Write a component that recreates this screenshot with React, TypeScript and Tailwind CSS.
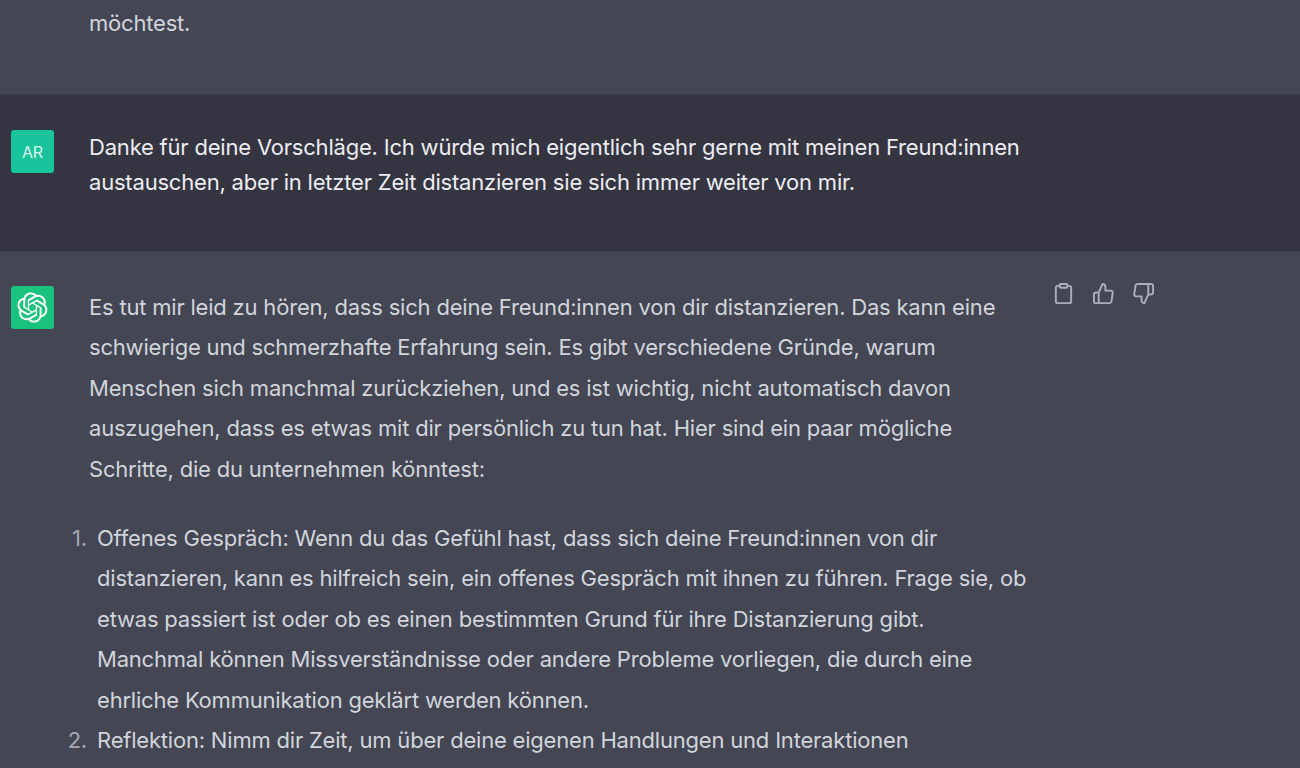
const logoPath =
  "M37.5324 16.8707C37.9808 15.5241 38.1363 14.0974 37.9886 12.6859C37.8409 11.2744 37.3934 9.91076 36.676 8.68622C35.6126 6.83404 33.9882 5.3676 32.0373 4.4985C30.0864 3.62941 27.9098 3.40259 25.8215 3.85078C24.8796 2.7893 23.7219 1.94125 22.4257 1.36341C21.1295 0.785575 19.7249 0.491269 18.3058 0.500197C16.1708 0.495044 14.0893 1.16803 12.3614 2.42214C10.6335 3.67624 9.34853 5.44666 8.6917 7.47815C7.30085 7.76286 5.98686 8.3414 4.8377 9.17505C3.68854 10.0087 2.73073 11.0782 2.02839 12.312C0.956464 14.1591 0.498905 16.2988 0.721698 18.4228C0.944492 20.5467 1.83612 22.5449 3.268 24.1293C2.81966 25.4759 2.66413 26.9026 2.81182 28.3141C2.95951 29.7256 3.40701 31.0892 4.12437 32.3138C5.18791 34.1659 6.8123 35.6322 8.76321 36.5013C10.7141 37.3704 12.8907 37.5973 14.9789 37.1492C15.9208 38.2107 17.0786 39.0587 18.3747 39.6366C19.6709 40.2144 21.0755 40.5087 22.4946 40.4998C24.6307 40.5054 26.7133 39.8321 28.4418 38.5772C30.1704 37.3223 31.4556 35.5506 32.1119 33.5179C33.5027 33.2332 34.8167 32.6547 35.9659 31.821C37.115 30.9874 38.0728 29.9178 38.7752 28.684C39.8458 26.8371 40.3023 24.6979 40.0789 22.5748C39.8556 20.4517 38.9639 18.4544 37.5324 16.8707ZM22.4978 37.8849C20.7443 37.8874 19.0459 37.2733 17.6994 36.1501C17.7601 36.117 17.8666 36.0586 17.936 36.0161L25.9004 31.4156C26.1003 31.3019 26.2663 31.137 26.3813 30.9378C26.4964 30.7386 26.5563 30.5124 26.5549 30.2825V19.0542L29.9213 20.998C29.9389 21.0068 29.9541 21.0198 29.9656 21.0359C29.977 21.052 29.9842 21.0707 29.9867 21.0902V30.3889C29.9842 32.375 29.1946 34.2791 27.7909 35.6841C26.3872 37.0892 24.4838 37.8806 22.4978 37.8849ZM6.39227 31.0064C5.51397 29.4888 5.19742 27.7107 5.49804 25.9832C5.55718 26.0187 5.66048 26.0818 5.73461 26.1244L13.699 30.7248C13.8975 30.8408 14.1233 30.902 14.3532 30.902C14.583 30.902 14.8088 30.8408 15.0073 30.7248L24.731 25.1103V28.9979C24.7321 29.0177 24.7283 29.0376 24.7199 29.0556C24.7115 29.0736 24.6988 29.0893 24.6829 29.1012L16.6317 33.7497C14.9096 34.7416 12.8643 35.0097 10.9447 34.4954C9.02506 33.9811 7.38785 32.7263 6.39227 31.0064ZM4.29707 13.6194C5.17156 12.0998 6.55279 10.9364 8.19885 10.3327C8.19885 10.4013 8.19491 10.5228 8.19491 10.6071V19.808C8.19351 20.0378 8.25334 20.2638 8.36823 20.4629C8.48312 20.6619 8.64893 20.8267 8.84863 20.9404L18.5723 26.5542L15.206 28.4979C15.1894 28.5089 15.1703 28.5155 15.1505 28.5173C15.1307 28.5191 15.1107 28.516 15.0924 28.5082L7.04046 23.8557C5.32135 22.8601 4.06716 21.2235 3.55289 19.3046C3.03862 17.3858 3.30624 15.3413 4.29707 13.6194ZM31.955 20.0556L22.2312 14.4411L25.5976 12.4981C25.6142 12.4872 25.6333 12.4805 25.6531 12.4787C25.6729 12.4769 25.6928 12.4801 25.7111 12.4879L33.7631 17.1364C34.9967 17.849 36.0017 18.8982 36.6606 20.1613C37.3194 21.4244 37.6047 22.849 37.4832 24.2684C37.3617 25.6878 36.8382 27.0432 35.9743 28.1759C35.1103 29.3086 33.9415 30.1717 32.6047 30.6641C32.6047 30.5947 32.6047 30.4733 32.6047 30.3889V21.188C32.6066 20.9586 32.5474 20.7328 32.4332 20.5338C32.319 20.3348 32.154 20.1698 31.955 20.0556ZM35.3055 15.0128C35.2464 14.9765 35.1431 14.9142 35.069 14.8717L27.1045 10.2712C26.906 10.1554 26.6803 10.0943 26.4504 10.0943C26.2206 10.0943 25.9948 10.1554 25.7963 10.2712L16.0726 15.8858V11.9982C16.0715 11.9783 16.0753 11.9585 16.0837 11.9405C16.0921 11.9225 16.1048 11.9068 16.1207 11.8949L24.1719 7.25025C25.4053 6.53903 26.8158 6.19376 28.2383 6.25482C29.6608 6.31589 31.0364 6.78077 32.2044 7.59508C33.3723 8.40939 34.2842 9.53945 34.8334 10.8531C35.3826 12.1667 35.5464 13.6095 35.3055 15.0128ZM14.2424 21.9419L10.8752 19.9981C10.8576 19.9893 10.8423 19.9763 10.8309 19.9602C10.8195 19.9441 10.8122 19.9254 10.8098 19.9058V10.6071C10.8107 9.18295 11.2173 7.78848 11.9819 6.58696C12.7466 5.38544 13.8377 4.42659 15.1275 3.82264C16.4173 3.21869 17.8524 2.99464 19.2649 3.1767C20.6775 3.35876 22.0089 3.93941 23.1034 4.85067C23.0427 4.88379 22.937 4.94215 22.8668 4.98473L14.9024 9.58517C14.7025 9.69878 14.5366 9.86356 14.4215 10.0626C14.3065 10.2616 14.2466 10.4877 14.2479 10.7175L14.2424 21.9419ZM16.071 17.9991L20.4018 15.4978L24.7325 17.9975V22.9985L20.4018 25.4983L16.071 22.9985V17.9991Z";

function ActionIcon({ children }: { children: React.ReactNode }) {
  return (
    <svg viewBox="0 0 24 24" fill="none" stroke="currentColor" strokeWidth="2" strokeLinecap="round" strokeLinejoin="round" className="w-[23px] h-[23px]">
      {children}
    </svg>
  );
}

const listOne = [
  "Offenes Gespräch: Wenn du das Gefühl hast, dass sich deine Freund:innen von dir",
  "distanzieren, kann es hilfreich sein, ein offenes Gespräch mit ihnen zu führen. Frage sie, ob",
  "etwas passiert ist oder ob es einen bestimmten Grund für ihre Distanzierung gibt.",
  "Manchmal können Missverständnisse oder andere Probleme vorliegen, die durch eine",
  "ehrliche Kommunikation geklärt werden können.",
];

const intro = [
  "Es tut mir leid zu hören, dass sich deine Freund:innen von dir distanzieren. Das kann eine",
  "schwierige und schmerzhafte Erfahrung sein. Es gibt verschiedene Gründe, warum",
  "Menschen sich manchmal zurückziehen, und es ist wichtig, nicht automatisch davon",
  "auszugehen, dass es etwas mit dir persönlich zu tun hat. Hier sind ein paar mögliche",
  "Schritte, die du unternehmen könntest:",
];

export default function App() {
  return (
    <div className="h-[768px] overflow-hidden bg-[#444654] font-['Inter',sans-serif] text-[22px] tracking-[-0.2px]">
      <div className="h-[95px] border-b border-[#3c3d49] pl-[89px] pt-[3px] leading-[40px] text-[#d1d5db]">
        möchtest.
      </div>

      <div className="h-[156px] flex bg-[#343541] border-b border-[#2d2e38] pl-[11px] pt-[35px]">
        <div className="w-[43px] h-[43px] shrink-0 rounded-[3px] bg-[#19c39b] flex items-center justify-center text-[16px] text-[#d9f3ec]">
          AR
        </div>
        <div className="ml-[35px] w-[936px] leading-[35px] text-[#ececf1]">
          Danke für deine Vorschläge. Ich würde mich eigentlich sehr gerne mit meinen Freund:innen
          <br />
          austauschen, aber in letzter Zeit distanzieren sie sich immer weiter von mir.
        </div>
      </div>

      <div className="flex pl-[11px] pt-[35px]">
        <div className="w-[43px] h-[43px] shrink-0 rounded-[3px] bg-[#19c37d] flex items-center justify-center text-white">
          <svg viewBox="0 0 41 41" fill="currentColor" className="w-[31px] h-[31px]">
            <path d={logoPath} />
          </svg>
        </div>

        <div className="ml-[35px] w-[948px] pt-[1px] leading-[40.4px] text-[#d1d5db]">
          <p className="mb-[29px]">
            {intro.map((line) => (
              <span key={line} className="block">{line}</span>
            ))}
          </p>
          <ol className="-ml-[22px]">
            <li className="flex">
              <span className="w-[30px] shrink-0 text-right pr-[10px] -ml-[0px] text-[#a3a7b3]">1.</span>
              <div>
                {listOne.map((line) => (
                  <span key={line} className="block">{line}</span>
                ))}
              </div>
            </li>
            <li className="flex">
              <span className="w-[30px] shrink-0 text-right pr-[10px] text-[#a3a7b3]">2.</span>
              <div>Reflektion: Nimm dir Zeit, um über deine eigenen Handlungen und Interaktionen</div>
            </li>
          </ol>
        </div>

        <div className="flex gap-[17px] ml-[15px] mt-[-4px] h-[23px] text-[#acacbe]">
          <ActionIcon>
            <path d="M16 4h2a2 2 0 0 1 2 2v14a2 2 0 0 1-2 2H6a2 2 0 0 1-2-2V6a2 2 0 0 1 2-2h2" />
            <rect x="8" y="2" width="8" height="4" rx="1" />
          </ActionIcon>
          <ActionIcon>
            <path d="M14 9V5a3 3 0 0 0-3-3l-4 9v11h11.28a2 2 0 0 0 2-1.7l1.38-9a2 2 0 0 0-2-2.3zM7 22H4a2 2 0 0 1-2-2v-7a2 2 0 0 1 2-2h3" />
          </ActionIcon>
          <ActionIcon>
            <path d="M10 15v4a3 3 0 0 0 3 3l4-9V2H5.72a2 2 0 0 0-2 1.7l-1.38 9a2 2 0 0 0 2 2.3zm7-13h2.67A2.31 2.31 0 0 1 22 4v7a2.31 2.31 0 0 1-2.33 2H17" />
          </ActionIcon>
        </div>
      </div>
    </div>
  );
}
